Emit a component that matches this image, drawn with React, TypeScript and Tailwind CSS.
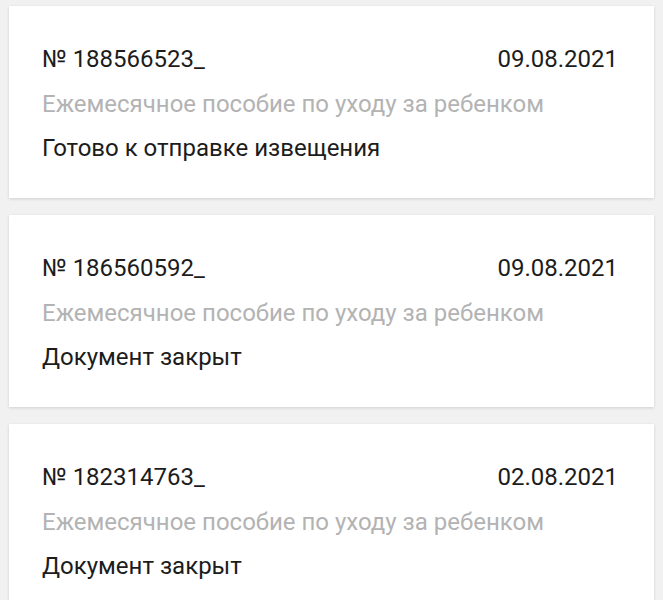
const items = [
  { num: "№ 188566523_", date: "09.08.2021", status: "Готово к отправке извещения" },
  { num: "№ 186560592_", date: "09.08.2021", status: "Документ закрыт" },
  { num: "№ 182314763_", date: "02.08.2021", status: "Документ закрыт" },
]

export default function App() {
  return (
    <div className="min-h-screen bg-[#f1f1f1] pt-[6px] font-['Roboto',sans-serif]">
      <div className="flex flex-col gap-[17px]">
        {items.map((it) => (
          <div
            key={it.num}
            className="mx-[9px] bg-white pl-[33px] pr-[36px] pt-[30px] pb-[28px] shadow-[0_1px_3px_rgba(0,0,0,0.14)]"
          >
            <div className="flex items-center justify-between text-[24px] leading-[46px] text-[#1c1c1c]">
              <span>{it.num}</span>
              <span>{it.date}</span>
            </div>
            <div className="text-[24px] leading-[44px] text-[#b3b3b3]">
              Ежемесячное пособие по уходу за ребенком
            </div>
            <div className="text-[24px] leading-[44px] text-[#1c1c1c]">{it.status}</div>
          </div>
        ))}
      </div>
    </div>
  )
}
